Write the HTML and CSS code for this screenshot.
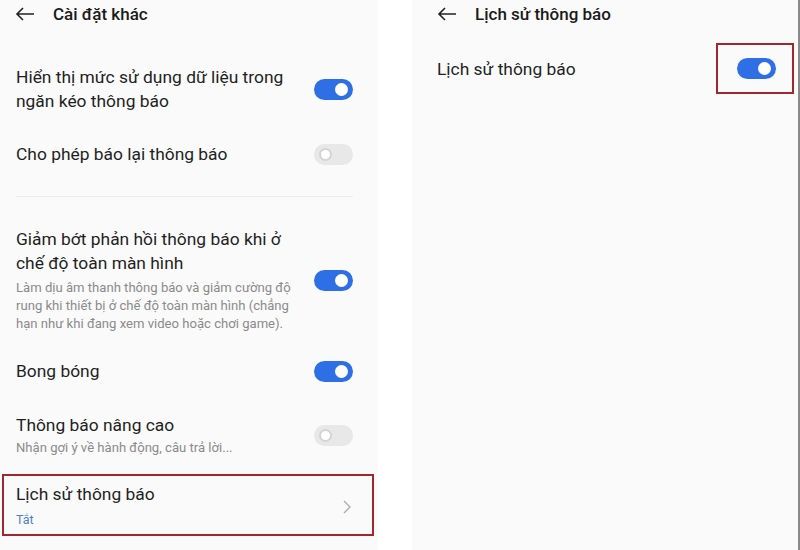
FILE: index.html
```html
<!DOCTYPE html>
<html lang="vi">
<head>
<meta charset="utf-8">
<link rel="stylesheet" href="styles.css">
</head>
<body>
<div class="screen">
  <section class="panel left">
    <header class="header">
      <svg class="back" width="20" height="14" viewBox="0 0 20 14"><path d="M19 7H2M8 1L2 7l6 6" fill="none" stroke="#222" stroke-width="1.6"/></svg>
      <span class="title">Cài đặt khác</span>
    </header>
    <div class="row r1">
      <div class="text"><div class="label">Hiển thị mức sử dụng dữ liệu trong ngăn kéo thông báo</div></div>
      <span class="toggle on"></span>
    </div>
    <div class="row r2">
      <div class="text"><div class="label">Cho phép báo lại thông báo</div></div>
      <span class="toggle off"></span>
    </div>
    <div class="divider"></div>
    <div class="row r3">
      <div class="text">
        <div class="label">Giảm bớt phản hồi thông báo khi ở chế độ toàn màn hình</div>
        <div class="sub s3">Làm dịu âm thanh thông báo và giảm cường độ rung khi thiết bị ở chế độ toàn màn hình (chẳng hạn như khi đang xem video hoặc chơi game).</div>
      </div>
      <span class="toggle on"></span>
    </div>
    <div class="row r4">
      <div class="text"><div class="label">Bong bóng</div></div>
      <span class="toggle on"></span>
    </div>
    <div class="row r5">
      <div class="text">
        <div class="label">Thông báo nâng cao</div>
        <div class="sub s1">Nhận gợi ý về hành động, câu trả lời...</div>
      </div>
      <span class="toggle off"></span>
    </div>
    <div class="row r6 boxed">
      <div class="text">
        <div class="label">Lịch sử thông báo</div>
        <div class="value">Tắt</div>
      </div>
      <svg class="chev" width="8" height="14" viewBox="0 0 8 14"><path d="M1 1l6 6-6 6" fill="none" stroke="#aaa" stroke-width="1.3"/></svg>
    </div>
  </section>
  <section class="panel right">
    <header class="header">
      <svg class="back" width="20" height="14" viewBox="0 0 20 14"><path d="M19 7H2M8 1L2 7l6 6" fill="none" stroke="#222" stroke-width="1.6"/></svg>
      <span class="title">Lịch sử thông báo</span>
    </header>
    <div class="row rr">
      <div class="text"><div class="label">Lịch sử thông báo</div></div>
      <div class="hl"><span class="toggle on"></span></div>
    </div>
  </section>
</div>
</body>
</html>
```

FILE: styles.css
```css
html, body {
  margin: 0;
  padding: 0;
  background: #fff;
}
body {
  font-family: Roboto, "Noto Sans", "Liberation Sans", sans-serif;
  color: #1f1f1f;
}
.screen {
  display: flex;
  width: 800px;
  height: 550px;
  gap: 34px;
}
.panel {
  background: #fafafa;
  display: flex;
  flex-direction: column;
}
.left {
  width: 378px;
}
.right {
  flex: 1;
  border-right: 2px solid #8a8a8a;
}
.header {
  height: 28px;
  display: flex;
  align-items: center;
  padding-left: 15px;
}
.right .header {
  padding-left: 25px;
}
.back {
  flex: none;
}
.title {
  margin-left: 18px;
  font-size: 17px;
  font-weight: 500;
  color: #1a1a1a;
}
.row {
  display: flex;
  align-items: center;
  padding: 0 25px 0 16px;
}
.text {
  flex: 1;
}
.label {
  font-size: 17.4px;
  line-height: 24px;
}
.r1 .label {
  width: 285px;
}
.r3 .label {
  width: 295px;
}
.sub {
  font-size: 13.1px;
  line-height: 18px;
  color: #8a8a8a;
  width: 292px;
}
.s3 {
  margin-top: 4px;
}
.s1 {
  margin-top: 2px;
}
.r1 { margin-top: 37px; }
.r2 { margin-top: 29px; }
.divider {
  height: 1px;
  background: #ececec;
  margin: 30px 25px 0 16px;
}
.r3 { margin-top: 30px; }
.r4 { margin-top: 26px; }
.r5 { margin-top: 30px; }
.boxed {
  margin: 17px 4px 0 2px;
  border: 2px solid #a3262c;
  padding: 6px 21px 5px 12px;
}
.value {
  margin-top: 5px;
  font-size: 12.5px;
  line-height: 18px;
  color: #4a7fcf;
}
.chev {
  margin-top: 2px;
}
.toggle {
  flex: none;
  position: relative;
  display: block;
  width: 39px;
  height: 21px;
  border-radius: 11px;
}
.toggle.on {
  background: #2f6fe6;
}
.toggle.on::after {
  content: "";
  position: absolute;
  right: 5px;
  top: 4px;
  width: 13px;
  height: 13px;
  border-radius: 50%;
  background: #fff;
}
.toggle.off {
  background: #e8e8e8;
}
.toggle.off::after {
  content: "";
  position: absolute;
  left: 5px;
  top: 4px;
  width: 9px;
  height: 9px;
  border-radius: 50%;
  background: #fff;
  border: 2px solid #d4d4d4;
}
.rr {
  margin-top: 15px;
  padding: 0 4px 0 25px;
}
.hl {
  border: 2px solid #a3262c;
  padding: 13px 16px 13px 19px;
}
```
